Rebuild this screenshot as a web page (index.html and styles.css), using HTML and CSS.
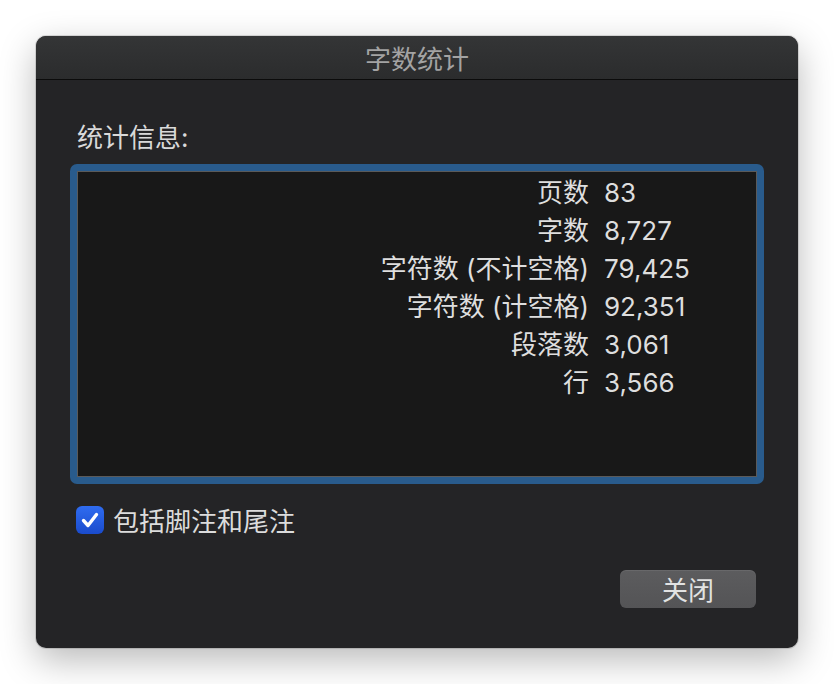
FILE: index.html
```html
<!DOCTYPE html>
<html lang="zh-CN">
<head>
<meta charset="utf-8">
<title>字数统计</title>
<link rel="stylesheet" href="styles.css">
</head>
<body>
<div class="window">
  <div class="titlebar">字数统计</div>
  <div class="content">
    <div class="section-label">统计信息:</div>
    <div class="focus-ring">
      <div class="stats">
        <div class="stats-grid">
          <span class="k">页数</span><span class="v">83</span>
          <span class="k">字数</span><span class="v">8,727</span>
          <span class="k">字符数 (不计空格)</span><span class="v">79,425</span>
          <span class="k">字符数 (计空格)</span><span class="v">92,351</span>
          <span class="k">段落数</span><span class="v">3,061</span>
          <span class="k">行</span><span class="v">3,566</span>
        </div>
      </div>
    </div>
    <label class="check-row">
      <span class="checkbox">
        <svg viewBox="0 0 28 28" width="28" height="28"><path d="M7.5 14.5 L12 19.5 L20.5 8.5" fill="none" stroke="#fff" stroke-width="3.4" stroke-linecap="round" stroke-linejoin="round"/></svg>
      </span>
      <span class="check-label">包括脚注和尾注</span>
    </label>
    <div class="actions">
      <button class="btn">关闭</button>
    </div>
  </div>
</div>
</body>
</html>
```

FILE: styles.css
```css
* { box-sizing: border-box; }
html, body { margin: 0; padding: 0; }
body {
  background: #ffffff;
  font-family: "Inter", "Noto Sans CJK SC", sans-serif;
  width: 834px;
  height: 684px;
  overflow: hidden;
}
.window {
  margin: 36px 0 0 36px;
  width: 762px;
  height: 612px;
  border-radius: 10px;
  background: #242426;
  overflow: hidden;
  box-shadow: 0 0 0 1px rgba(0,0,0,0.12), 0 12px 36px rgba(0,0,0,0.28);
}
.titlebar {
  height: 44px;
  border-bottom: 1px solid #0b0b0b;
  background: linear-gradient(#343536, #2b2c2d);
  color: #a3a3a3;
  font-size: 26px;
  display: flex;
  align-items: center;
  justify-content: center;
  padding-bottom: 1px;
}
.content {
  padding: 42px 41px 0 41px;
  display: flex;
  flex-direction: column;
}
.section-label {
  color: #d9d9d9;
  font-size: 26px;
  line-height: 32px;
  height: 32px;
}
.focus-ring {
  margin: 10px -7px 0 -7px;
  padding: 7px;
  background: #295b8c;
  border-radius: 7px;
  height: 320px;
}
.stats {
  height: 306px;
  background: #181818;
  border: 1px solid #5a5a5a;
  padding-top: 2px;
}
.stats-grid {
  display: grid;
  grid-template-columns: 511px auto;
  column-gap: 15px;
  font-size: 26px;
  line-height: 38px;
  color: #dedede;
}
.k { text-align: right; white-space: nowrap; }
.v { white-space: nowrap; }
.check-row {
  margin-top: 22px;
  margin-left: -1px;
  display: flex;
  align-items: center;
  gap: 9px;
  height: 28px;
}
.checkbox {
  width: 28px;
  height: 28px;
  border-radius: 6px;
  background: linear-gradient(#2f6cf0, #1a4bcc);
  display: flex;
}
.check-label {
  color: #dcdcdc;
  font-size: 26px;
  line-height: 32px;
  padding-top: 3px;
}
.actions {
  margin-top: 36px;
  display: flex;
  justify-content: flex-end;
  margin-right: 1px;
}
.btn {
  width: 136px;
  height: 38px;
  border: none;
  border-radius: 6px;
  background: linear-gradient(#5c5c5e, #545456);
  box-shadow: inset 0 1px 0 rgba(255,255,255,0.08);
  color: #e2e2e2;
  font-family: "Noto Sans CJK SC", sans-serif;
  font-size: 26px;
  line-height: 38px;
  padding: 0;
}
```
